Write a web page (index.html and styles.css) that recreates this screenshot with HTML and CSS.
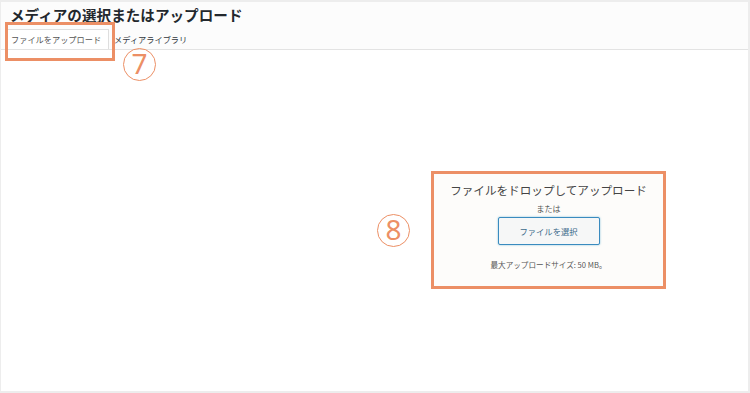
FILE: index.html
```html
<!doctype html>
<html>
<head>
<meta charset="utf-8">
<title>メディアの選択またはアップロード</title>
<link rel="stylesheet" href="styles.css">
</head>
<body>
<div class="frame">
	<div class="head">
		<h1 class="title">メディアの選択またはアップロード</h1>
		<div class="tabs">
			<a class="tab active">ファイルをアップロード</a>
			<a class="tab">メディアライブラリ</a>
		</div>
	</div>
	<div class="content">
		<div class="drop">
			<p class="drop-info">ファイルをドロップしてアップロード</p>
			<p class="drop-or">または</p>
			<button class="btn-select">ファイルを選択</button>
			<p class="drop-max">最大アップロードサイズ: 50 MB。</p>
		</div>
	</div>

	<!-- 注釈 -->
	<div class="mark-box mark-tab"></div>
	<div class="num num7">7</div>
	<div class="num num8">8</div>
</div>
</body>
</html>
```

FILE: styles.css
```css
* {margin:0; padding:0; box-sizing:border-box;}
body {background:#fff; font-family:"Noto Sans CJK JP","Noto Sans",sans-serif; color:#23282d;}

.frame {position:relative; width:750px; height:393px; border:2px solid #ededed; border-left-width:1px; background:#fff; overflow:hidden;}

.head {background:#fcfcfc; border-bottom:1px solid #e3e3e3; height:48px; display:flex; flex-direction:column;}
.title {font-size:14.6px; font-weight:bold; line-height:20px; padding:3px 0 0 9px; color:#23282d;}
.tabs {display:flex; margin-top:4px; padding-left:6px;}
.tab {display:block; font-size:8.2px; line-height:19px; height:20px; padding:0 5px 0 3px; color:#32373c; border:1px solid transparent; border-bottom:none;}
.tab.active {background:#fff; border-color:#dedede; padding-right:7px; color:#555;}
.tab + .tab {padding-left:4px;}

.content {padding:121px 0 0 430px;}
.drop {width:235px; height:118px; border:3px solid #ec8f65; background:#fdfcfa; display:flex; flex-direction:column; align-items:center; padding-top:9px;}
.drop-info {font-size:11.6px; line-height:14px; color:#444;}
.drop-or {font-size:8px; line-height:10px; margin-top:7px; color:#555;}
.btn-select {width:102px; height:28px; margin-top:3px; font-family:inherit; font-size:8.3px; color:#3b6a8a; background:#f6f7f7; border:1px solid #3a8bbf; border-radius:2px; box-shadow:0 0 2px rgba(30,140,190,.6);}
.drop-max {font-size:7.6px; line-height:10px; margin-top:15px; color:#555;}

.mark-box {position:absolute; border:3px solid #ec8f65;}
.mark-tab {left:4px; top:20px; width:110px; height:39px;}

.num {position:absolute; width:33px; height:33px; border:1.5px solid #ec8f65; border-radius:50%; color:#ec8f65; font-family:"Noto Sans",sans-serif; font-weight:400; font-size:28px; line-height:29px; text-align:center;}
.num7 {left:122px; top:46px;}
.num8 {left:376px; top:212px;}
```
